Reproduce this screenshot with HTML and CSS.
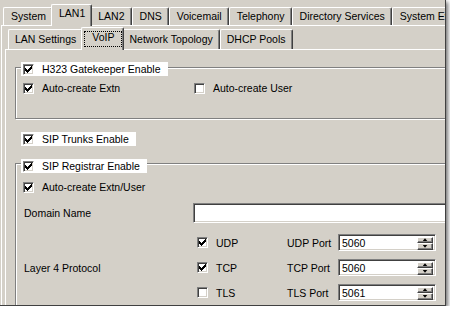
FILE: index.html
```html
<!doctype html>
<html lang="en">
<head>
    <meta charset="UTF-8">
    <title>LAN1 - VoIP</title>
    <link rel="stylesheet" href="styles.css">
</head>
<body>
    <div class="window">
        <ul class="tabs">
            <li>System</li>
            <li class="on">LAN1</li>
            <li>LAN2</li>
            <li>DNS</li>
            <li>Voicemail</li>
            <li>Telephony</li>
            <li>Directory Services</li>
            <li>System Ev</li>
        </ul>
        <div class="page">
            <ul class="tabs subtabs">
                <li>LAN Settings</li>
                <li class="on"><span class="focus">VoIP</span></li>
                <li>Network Topology</li>
                <li>DHCP Pools</li>
            </ul>
            <div class="sheet">
                <div class="group h323">
                    <label class="title"><span class="check"><svg width="7" height="7" viewBox="0 0 7 7"><path d="M0 2h1v3H0zM1 3h1v3H1zM2 4h1v3H2zM3 3h1v3H3zM4 2h1v3H4zM5 1h1v3H5zM6 0h1v3H6z"/></svg></span>H323 Gatekeeper Enable</label>
                    <div class="row two">
                        <label class="opt"><span class="check"><svg width="7" height="7" viewBox="0 0 7 7"><path d="M0 2h1v3H0zM1 3h1v3H1zM2 4h1v3H2zM3 3h1v3H3zM4 2h1v3H4zM5 1h1v3H5zM6 0h1v3H6z"/></svg></span>Auto-create Extn</label>
                        <label class="opt"><span class="check"></span>Auto-create User</label>
                    </div>
                </div>

                <label class="title solo"><span class="check"><svg width="7" height="7" viewBox="0 0 7 7"><path d="M0 2h1v3H0zM1 3h1v3H1zM2 4h1v3H2zM3 3h1v3H3zM4 2h1v3H4zM5 1h1v3H5zM6 0h1v3H6z"/></svg></span>SIP Trunks Enable</label>

                <div class="group sip">
                    <label class="title"><span class="check"><svg width="7" height="7" viewBox="0 0 7 7"><path d="M0 2h1v3H0zM1 3h1v3H1zM2 4h1v3H2zM3 3h1v3H3zM4 2h1v3H4zM5 1h1v3H5zM6 0h1v3H6z"/></svg></span>SIP Registrar Enable</label>
                    <div class="row">
                        <label class="opt"><span class="check"><svg width="7" height="7" viewBox="0 0 7 7"><path d="M0 2h1v3H0zM1 3h1v3H1zM2 4h1v3H2zM3 3h1v3H3zM4 2h1v3H4zM5 1h1v3H5zM6 0h1v3H6z"/></svg></span>Auto-create Extn/User</label>
                    </div>
                    <div class="field">
                        <span class="lbl">Domain Name</span>
                        <span class="edit"></span>
                    </div>
                    <div class="proto">
                        <span class="lbl">Layer 4 Protocol</span>
                        <div class="proto-rows">
                            <label class="opt"><span class="check"><svg width="7" height="7" viewBox="0 0 7 7"><path d="M0 2h1v3H0zM1 3h1v3H1zM2 4h1v3H2zM3 3h1v3H3zM4 2h1v3H4zM5 1h1v3H5zM6 0h1v3H6z"/></svg></span>UDP</label>
                            <span class="port">UDP Port</span>
                            <span class="spin"><span class="val">5060</span><span class="btns"><i class="up"></i><i class="down"></i></span></span>

                            <label class="opt"><span class="check"><svg width="7" height="7" viewBox="0 0 7 7"><path d="M0 2h1v3H0zM1 3h1v3H1zM2 4h1v3H2zM3 3h1v3H3zM4 2h1v3H4zM5 1h1v3H5zM6 0h1v3H6z"/></svg></span>TCP</label>
                            <span class="port">TCP Port</span>
                            <span class="spin"><span class="val">5060</span><span class="btns"><i class="up"></i><i class="down"></i></span></span>

                            <label class="opt"><span class="check"></span>TLS</label>
                            <span class="port">TLS Port</span>
                            <span class="spin"><span class="val">5061</span><span class="btns"><i class="up"></i><i class="down"></i></span></span>
                        </div>
                    </div>
                </div>
            </div>
        </div>
    </div>
</body>
</html>
```

FILE: styles.css
```css
*{
    margin:0;
    padding:0;
    box-sizing:border-box;
}
li{
    list-style:none;
}
body{
    background:#fff;
    font-family:"Liberation Sans", Arial, sans-serif;
    font-size:10.5px;
    color:#000;
}
.window{
    width:446px;
    height:306px;
    padding:3px 0 0 1px;
    background:#d4d0c8;
    border-right:1px solid #404040;
    border-bottom:1px solid #404040;
    box-shadow:2px 2px 4px rgba(0,0,0,.55);
    overflow:hidden;
}

/* tab strips */
.tabs{
    display:flex;
    align-items:flex-end;
    height:22px;
    padding-left:2px;
}
.tabs li{
    flex-shrink:0;
    height:18px;
    padding:2px 6px 0 7px;
    line-height:13px;
    white-space:nowrap;
    background:#d4d0c8;
    border:1px solid;
    border-bottom:none;
    border-color:#fff #404040 #fff #fff;
    border-radius:2px 2px 0 0;
    box-shadow:inset -1px 0 #808080;
}
.tabs li.on{
    position:relative;
    z-index:2;
    height:22px;
    margin:0 -2px -1px;
}
.subtabs{
    height:23px;
    padding-left:3px;
}
.subtabs li{
    height:20px;
    padding:3px 6px 0;
}
.subtabs li.on{
    height:23px;
    padding:3px 1px 0 2px;
}
.focus{
    display:block;
    height:16px;
    padding:0 7px;
    line-height:10px;
    border:1px dotted #000;
}

/* panels */
.page{
    position:relative;
    z-index:1;
    width:480px;
    height:300px;
    padding-left:3px;
    border-top:1px solid #fff;
    border-left:1px solid #fff;
}
.sheet{
    position:relative;
    z-index:1;
    height:280px;
    padding:17px 0 0 9px;
    border-top:1px solid #fff;
    border-left:1px solid #fff;
}

/* group boxes */
.group{
    border:1px solid #808080;
    box-shadow:inset 1px 1px #fff, 1px 1px #fff;
}
.title{
    display:flex;
    align-items:center;
    width:fit-content;
    height:14px;
    margin:-6px 0 0 5px;
    padding:0 7px 0 2px;
    background:#fff;
}
.title.solo{
    margin:13px 0 0 6px;
}
.h323{
    padding-bottom:22px;
}
.sip{
    margin-top:17px;
    height:200px;
}
.sip .title{
    margin-top:-5px;
}
.row{
    display:grid;
    grid-template-columns:171px auto;
    height:16px;
    padding-left:7px;
    margin-top:4px;
}
.sip .row{
    margin-top:6px;
}
.opt{
    display:flex;
    align-items:center;
}

/* checkbox */
.check{
    display:flex;
    align-items:center;
    justify-content:center;
    width:11px;
    height:11px;
    margin-right:8px;
    background:#fff;
    border:1px solid;
    border-color:#808080 #fff #fff #808080;
    box-shadow:inset 1px 1px #404040, inset -1px -1px #d4d0c8;
}
.check svg{
    display:block;
    shape-rendering:crispEdges;
}

/* fields */
.field{
    display:flex;
    align-items:center;
    height:20px;
    margin-top:8px;
    padding-left:8px;
}
.lbl{
    flex-shrink:0;
    width:169px;
}
.edit{
    flex:1;
    height:20px;
    background:#fff;
    border:1px solid;
    border-color:#808080 #fff #fff #808080;
    box-shadow:inset 1px 1px #404040, inset -1px -1px #d4d0c8;
}
.proto{
    display:flex;
    align-items:center;
    margin-top:11px;
    padding-left:8px;
}
.proto .lbl{
    width:173px;
}
.proto-rows{
    display:grid;
    grid-template-columns:90px 51px 98px;
    grid-auto-rows:17px;
    row-gap:8px;
    align-items:center;
}
.spin{
    display:flex;
    align-items:center;
    height:17px;
    padding:0 2px 0 3px;
    background:#fff;
    border:1px solid;
    border-color:#808080 #fff #fff #808080;
    box-shadow:inset 1px 1px #404040, inset -1px -1px #d4d0c8;
}
.val{
    flex:1;
    padding-top:1px;
}
.btns{
    display:flex;
    flex-direction:column;
    width:16px;
    height:13px;
    margin-top:1px;
}
.btns i{
    display:flex;
    align-items:center;
    justify-content:center;
    flex:1;
    background:#d4d0c8;
    border:1px solid;
    border-color:#fff #404040 #404040 #fff;
    box-shadow:inset -1px -1px #808080;
}
.btns i:after{
    content:"";
    width:5px;
    height:3px;
    background:#000;
}
.btns .up:after{
    clip-path:polygon(50% 0, 100% 100%, 0 100%);
}
.btns .down:after{
    clip-path:polygon(0 0, 100% 0, 50% 100%);
}
```
